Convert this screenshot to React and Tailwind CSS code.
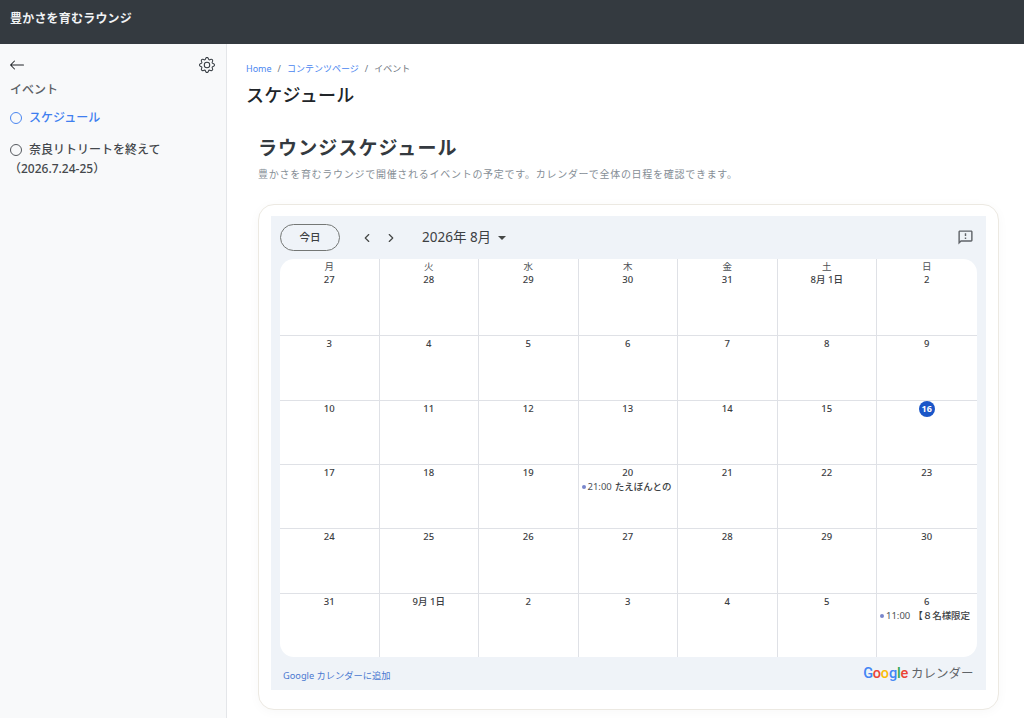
import React from "react";
import { ChevronLeft, ChevronRight } from "lucide-react";
import { BsArrowLeft, BsGear } from "react-icons/bs";
import { MdOutlineFeedback } from "react-icons/md";

const jp = '"Noto Sans", "Noto Sans CJK JP", sans-serif';
const weekdays = ["月", "火", "水", "木", "金", "土", "日"];

const weeks = [
  ["27", "28", "29", "30", "31", "8月 1日", "2"],
  ["3", "4", "5", "6", "7", "8", "9"],
  ["10", "11", "12", "13", "14", "15", "16"],
  ["17", "18", "19", "20", "21", "22", "23"],
  ["24", "25", "26", "27", "28", "29", "30"],
  ["31", "9月 1日", "2", "3", "4", "5", "6"],
];

const events = {
  "3-3": { time: "21:00", title: "たえぼんとの" },
  "5-6": { time: "11:00", title: "【８名様限定" },
};

function Sidebar() {
  return (
    <aside className="w-[227px] shrink-0 bg-[#f8f9fa] border-r border-[#e4e6e9] px-[10px] pt-[11px]">
      <div className="flex items-center justify-between pr-[1px] h-[19px]">
        <BsArrowLeft size={16} className="text-[#212529] -ml-[1px]" />
        <BsGear size={16} className="text-[#343a40]" />
      </div>
      <div className="mt-[7px] text-[12px] leading-[18px] font-medium text-[#5c6166]">イベント</div>
      <div className="mt-[10px] flex items-center gap-[7px] text-[12px] leading-[18px] font-medium text-[#3f7ff0]">
        <span className="w-[12px] h-[12px] rounded-full border border-[#4a86f0]" />
        スケジュール
      </div>
      <div className="mt-[13px] text-[12px] leading-[19px] font-medium text-[#44484c]">
        <div className="flex items-center gap-[7px]">
          <span className="w-[12px] h-[12px] rounded-full border border-[#55595e]" />
          奈良リトリートを終えて
        </div>
        <div className="-ml-[1px]">（2026.7.24-25）</div>
      </div>
    </aside>
  );
}

function Cell({ label, event, today }) {
  return (
    <div className="flex flex-col items-center pt-[1px]">
      {today ? (
        <span className="-mt-[1px] w-[16px] h-[16px] rounded-full bg-[#1a56c8] text-white flex items-center justify-center text-[9px] font-bold">
          {label}
        </span>
      ) : (
        <span className="text-[9.5px] leading-[14px] font-medium text-[#3c4043]">{label}</span>
      )}
      {event && (
        <div className="w-full flex items-center pl-[3px] text-[9.5px] leading-[14px] whitespace-nowrap overflow-hidden">
          <span className="w-[4px] h-[4px] rounded-full bg-[#7986cb] mr-[2px] shrink-0" />
          <span className="text-[#4d5156] mr-[3px]">{event.time}</span>
          <span className="font-medium text-[#3c4043] tracking-[-0.05px]">{event.title}</span>
        </div>
      )}
    </div>
  );
}

function Calendar() {
  return (
    <div className="bg-[#eff3f8] h-[474px] px-[9px] flex flex-col">
      <div className="h-[43px] shrink-0 flex items-center">
        <button className="w-[60px] h-[27px] rounded-full border border-[#747775] text-[10.5px] font-medium text-[#3c4043]">
          今日
        </button>
        <ChevronLeft size={14} strokeWidth={2} className="ml-[20px] text-[#444746]" />
        <ChevronRight size={14} strokeWidth={2} className="ml-[10px] text-[#444746]" />
        <span className="ml-[24px] text-[13.5px] text-[#3c4043]">2026年 8月</span>
        <span className="ml-[7px] border-x-[4px] border-x-transparent border-t-[4px] border-t-[#444746]" />
        <MdOutlineFeedback size={17} className="ml-auto mr-[3px] text-[#5f6368]" />
      </div>
      <div className="h-[398px] shrink-0 bg-white rounded-[14px] overflow-hidden grid grid-rows-[77px_65px_64px_64px_65px_63px]">
        {weeks.map((week, r) => (
          <div key={r} className={`grid grid-cols-7 ${r < 5 ? "border-b border-[#dfe1e6]" : ""}`}>
            {week.map((label, c) => (
              <div key={c} className={`flex flex-col ${c < 6 ? "border-r border-[#dfe1e6]" : ""}`}>
                {r === 0 && (
                  <div className="text-center text-[9.5px] leading-[12px] pt-[2px] -mb-[1px] text-[#4d5156]">{weekdays[c]}</div>
                )}
                <Cell label={label} event={events[`${r}-${c}`]} today={r === 2 && c === 6} />
              </div>
            ))}
          </div>
        ))}
      </div>
      <div className="flex-1 flex items-center justify-between px-[3px]">
        <span className="pt-[5px] text-[9.25px] text-[#4a78d0]">Google カレンダーに追加</span>
        <span className="flex items-center gap-[3px] pt-[1px] text-[12.5px] text-[#5f6368]">
          <span className="text-[14.5px] leading-none font-medium tracking-[-0.2px]" style={{ fontFamily: "Roboto, sans-serif" }}>
            <span className="text-[#4285f4]">G</span>
            <span className="text-[#ea4335]">o</span>
            <span className="text-[#fbbc05]">o</span>
            <span className="text-[#4285f4]">g</span>
            <span className="text-[#34a853]">l</span>
            <span className="text-[#ea4335]">e</span>
          </span>
          カレンダー
        </span>
      </div>
    </div>
  );
}

export default function App() {
  return (
    <div className="h-[718px] overflow-hidden bg-white flex flex-col" style={{ fontFamily: jp }}>
      <header className="h-[44px] shrink-0 bg-[#343a40] flex items-center px-[10px] pb-[6px] text-[12px] tracking-[0.2px] font-bold text-[#f1f3f5]">
        豊かさを育むラウンジ
      </header>
      <div className="flex-1 flex min-h-0">
        <Sidebar />
        <main className="flex-1 pl-[19px] pt-[18px] pr-[25px]">
          <div className="flex items-center text-[9px] leading-[14px] text-[#6c757d]">
            <span className="text-[#4a86f0]">Home</span>
            <span className="mx-[6px]">/</span>
            <span className="text-[#4a86f0]">コンテンツページ</span>
            <span className="mx-[6px]">/</span>
            <span>イベント</span>
          </div>
          <h1 className="mt-[6px] text-[18px] leading-[26px] tracking-[0.3px] font-medium text-[#212529]">スケジュール</h1>
          <section className="pl-[12px] mt-[26px]">
            <h2 className="text-[19px] leading-[28px] font-bold tracking-[1.1px] text-[#343a40]">ラウンジスケジュール</h2>
            <p className="mt-[4px] text-[10px] leading-[16px] tracking-[0.72px] text-[#868e96]">
              豊かさを育むラウンジで開催されるイベントの予定です。カレンダーで全体の日程を確認できます。
            </p>
            <div className="mt-[22px] h-[506px] bg-white rounded-[16px] border border-[#ece9e2] pl-[12px] pr-[12.5px] pt-[11px] shadow-[0_2px_12px_rgba(0,0,0,0.03)]">
              <Calendar />
            </div>
          </section>
        </main>
      </div>
    </div>
  );
}
